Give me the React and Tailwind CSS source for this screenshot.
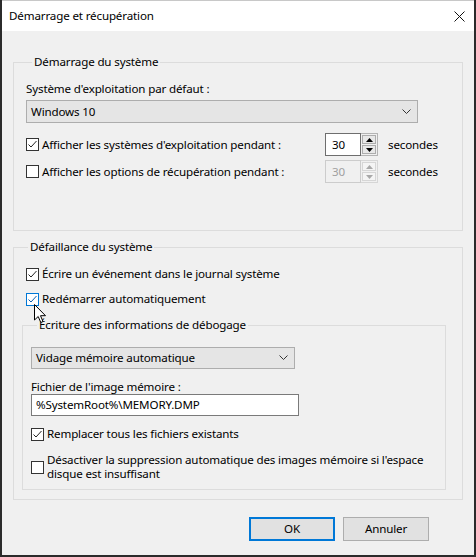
import React from 'react';

const Check = ({ checked, hover }) => (
  <span
    className={`flex h-[13px] w-[13px] shrink-0 items-center justify-center border bg-white ${
      hover ? 'border-[#0078d7]' : 'border-[#333333]'
    }`}
  >
    {checked && (
      <svg width="11" height="11" viewBox="0 0 11 11">
        <polyline
          points="1.5,5.5 4,8 9.5,2"
          fill="none"
          stroke={hover ? '#0b5cad' : '#222'}
          strokeWidth="1"
        />
      </svg>
    )}
  </span>
);

const CheckRow = ({ checked, hover, children, className = '' }) => (
  <div className={`flex items-center gap-[3px] ${className}`}>
    <Check checked={checked} hover={hover} />
    <span className="whitespace-nowrap">{children}</span>
  </div>
);

const Chevron = () => (
  <svg width="9" height="6" viewBox="0 0 9 6">
    <polyline points="0.5,0.5 4.5,4.5 8.5,0.5" fill="none" stroke="#333" strokeWidth="1" />
  </svg>
);

const Combo = ({ value, className }) => (
  <div
    className={`flex items-center justify-between border border-[#adadad] bg-[#e5e5e5] pl-[4px] pr-[6px] ${className}`}
  >
    <span>{value}</span>
    <Chevron />
  </div>
);

const Arrow = ({ up, disabled }) => (
  <svg width="7" height="4" viewBox="0 0 7 4">
    <polygon
      points={up ? '3.5,0 7,4 0,4' : '0,0 7,0 3.5,4'}
      fill={disabled ? '#a8a8a8' : '#000'}
    />
  </svg>
);

const Spinner = ({ value, disabled }) => (
  <div className="flex h-[23px]">
    <div
      className={`flex w-[36px] items-center border pl-[6px] ${
        disabled ? 'border-[#cccccc] bg-[#f0f0f0] text-[#a0a0a0]' : 'border-[#6e6e6e] bg-white'
      }`}
    >
      {value}
    </div>
    <div
      className={`flex w-[17px] flex-col gap-[1px] border-y border-r p-[1px] ${
        disabled ? 'border-[#d6d6d6]' : 'border-[#b4b4b4]'
      }`}
    >
      <div
        className={`flex flex-1 items-center justify-center border ${
          disabled ? 'border-[#d6d6d6] bg-[#f4f4f4]' : 'border-[#adadad] bg-[#e8e8e8]'
        }`}
      >
        <Arrow up disabled={disabled} />
      </div>
      <div
        className={`flex flex-1 items-center justify-center border ${
          disabled ? 'border-[#d6d6d6] bg-[#f4f4f4]' : 'border-[#adadad] bg-[#e8e8e8]'
        }`}
      >
        <Arrow disabled={disabled} />
      </div>
    </div>
  </div>
);

export default function App() {
  return (
    <div className="relative flex h-[557px] w-[476px] flex-col border-x-2 border-b-2 border-[#2b2b2b] bg-[#f0f0f0] font-['Noto_Sans',sans-serif] text-[11.6px] leading-[16px] tracking-[-0.15px] text-black">
      {/* Title bar */}
      <div className="flex h-[31px] shrink-0 items-center justify-between border-t border-[#c8c8c8] bg-white pl-[7px] pr-[9px]">
        <span>Démarrage et récupération</span>
        <svg width="11" height="11" viewBox="0 0 11 11">
          <path d="M0.5,0.5 L10.5,10.5 M10.5,0.5 L0.5,10.5" stroke="#111" strokeWidth="1" />
        </svg>
      </div>

      <div className="flex flex-col px-[11px] pt-[23px]">
        {/* Démarrage du système */}
        <fieldset className="border border-[#dcdcdc] px-[12px] pb-[47px]">
          <legend className="ml-[6px] px-[2px]">Démarrage du système</legend>
          <div className="mt-[11px]">Système d'exploitation par défaut :</div>
          <Combo value="Windows 10" className="mt-[3px] h-[23px] w-[392px]" />
          <div className="mt-[10px] flex items-center">
            <CheckRow checked className="w-[299px]">
              Afficher les systèmes d'exploitation pendant :
            </CheckRow>
            <Spinner value="30" />
            <span className="ml-[10px]">secondes</span>
          </div>
          <div className="mt-[4px] flex items-center">
            <CheckRow className="w-[299px]">Afficher les options de récupération pendant :</CheckRow>
            <Spinner value="30" disabled />
            <span className="ml-[10px]">secondes</span>
          </div>
        </fieldset>

        {/* Défaillance du système */}
        <fieldset className="mt-[8px] border border-[#dcdcdc] pb-[9px] pl-[8px]">
          <legend className="ml-[6px] px-[2px]">Défaillance du système</legend>
          <CheckRow checked className="ml-[4px] mt-[11px]">
            Écrire un événement dans le journal système
          </CheckRow>
          <CheckRow checked hover className="ml-[4px] mt-[9px]">
            Redémarrer automatiquement
          </CheckRow>

          <fieldset className="mt-[10px] w-[424px] border border-[#dcdcdc] pb-[8px] pl-[8px]">
            <legend className="ml-[6px] px-[2px]">Écriture des informations de débogage</legend>
            <Combo value="Vidage mémoire automatique" className="mt-[14px] h-[22px] w-[264px]" />
            <div className="mt-[10px] leading-[15px]">Fichier de l'image mémoire :</div>
            <div className="flex h-[22px] w-[268px] items-center border border-[#7a7a7a] bg-white pl-[4px]">
              %SystemRoot%\MEMORY.DMP
            </div>
            <CheckRow checked className="mt-[10px]">
              Remplacer tous les fichiers existants
            </CheckRow>
            <div className="mt-[11px] flex items-center gap-[3px]">
              <Check />
              <span className="whitespace-nowrap leading-[14px]">
                Désactiver la suppression automatique des images mémoire si l'espace
                <br />
                disque est insuffisant
              </span>
            </div>
          </fieldset>
        </fieldset>

        {/* Buttons */}
        <div className="mr-[34px] mt-[17px] flex justify-end gap-[8px]">
          <button className="h-[24px] w-[86px] border-2 border-[#0078d7] bg-[#e1e1e1]">OK</button>
          <button className="h-[24px] w-[86px] border border-[#adadad] bg-[#e1e1e1]">Annuler</button>
        </div>
      </div>

      {/* Mouse cursor */}
      <svg
        className="absolute left-[32px] top-[304px]"
        width="13"
        height="20"
        viewBox="0 0 13 20"
      >
        <path
          d="M0.5,0.5 L0.5,16 L4.2,12.5 L6.8,18.5 L9,17.6 L6.5,11.7 L11.5,11.7 Z"
          fill="#fff"
          stroke="#000"
          strokeWidth="1"
          strokeLinejoin="round"
        />
      </svg>
    </div>
  );
}
